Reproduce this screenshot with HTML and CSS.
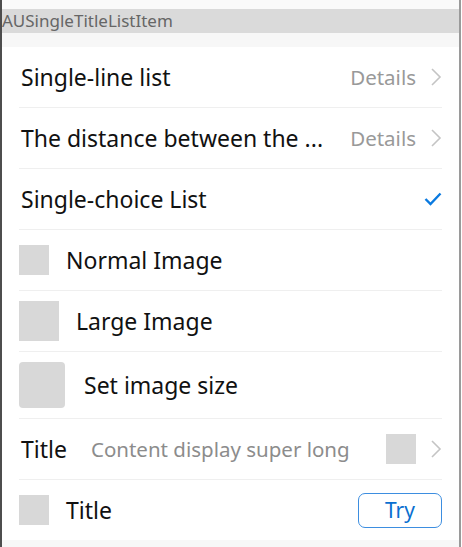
FILE: index.html
```html
<!DOCTYPE html>
<html>
<head>
<meta charset="utf-8">
<link rel="stylesheet" href="styles.css">
</head>
<body>
<div class="frame">
  <div class="top-gap"></div>
  <div class="section-title">AUSingleTitleListItem</div>
  <div class="mid-gap"></div>
  <div class="list">
    <div class="row">
      <span class="title">Single-line list</span>
      <span class="right"><span class="detail">Details</span><svg class="chev" viewBox="0 0 12 20" width="12" height="20"><path d="M2 2 L10 10 L2 18" fill="none" stroke="#c4c4c4" stroke-width="1.6"/></svg></span>
    </div>
    <div class="row">
      <span class="title">The distance between the ...</span>
      <span class="right"><span class="detail">Details</span><svg class="chev" viewBox="0 0 12 20" width="12" height="20"><path d="M2 2 L10 10 L2 18" fill="none" stroke="#c4c4c4" stroke-width="1.6"/></svg></span>
    </div>
    <div class="row">
      <span class="title">Single-choice List</span>
      <span class="right"><svg class="check" viewBox="0 0 18 14" width="18" height="14"><path d="M1.5 7 L6.5 12 L16.5 1.5" fill="none" stroke="#0a7ae0" stroke-width="2.4" stroke-linejoin="miter"/></svg></span>
    </div>
    <div class="row img-row">
      <span class="img img-30"></span>
      <span class="title">Normal Image</span>
    </div>
    <div class="row img-row">
      <span class="img img-40"></span>
      <span class="title">Large Image</span>
    </div>
    <div class="row img-row">
      <span class="img img-46"></span>
      <span class="title">Set image size</span>
    </div>
    <div class="row">
      <span class="title">Title</span>
      <span class="content">Content display super long</span>
      <span class="right"><span class="img img-30"></span><svg class="chev" viewBox="0 0 12 20" width="12" height="20"><path d="M2 2 L10 10 L2 18" fill="none" stroke="#c4c4c4" stroke-width="1.6"/></svg></span>
    </div>
    <div class="row img-row last">
      <span class="img img-30"></span>
      <span class="title">Title</span>
      <span class="right"><button class="try">Try</button></span>
    </div>
  </div>
  <div class="bottom-gap"></div>
</div>
</body>
</html>
```
FILE: styles.css
```css
html, body {
  margin: 0;
  padding: 0;
  background: #ffffff;
}
body {
  font-family: "Noto Sans", "Open Sans", sans-serif;
  width: 462px;
  height: 547px;
  overflow: hidden;
}
.frame {
  width: 457px;
  height: 547px;
  border-left: 2px solid #4d4d4d;
  border-right: 2px solid #9a9a9a;
  background: #ffffff;
  display: flex;
  flex-direction: column;
}
.top-gap {
  height: 9px;
  flex: none;
  background: #fafafa;
}
.section-title {
  height: 24px;
  flex: none;
  line-height: 24px;
  background: #dadada;
  color: #666666;
  font-size: 17px;
  white-space: nowrap;
  overflow: hidden;
}
.mid-gap {
  height: 14px;
  flex: none;
  background: #f7f7f7;
}
.list {
  flex: none;
  background: #fff;
  padding: 0 17px;
}
.row {
  display: flex;
  align-items: center;
  min-height: 60px;
  border-bottom: 1px solid #efefef;
  gap: 18px;
}
.img-row {
  gap: 17px;
}
.row.last {
  border-bottom: none;
}
.title {
  font-size: 23px;
  color: #111111;
  white-space: nowrap;
  padding-left: 2px;
}
.img-row .title {
  padding-left: 0;
}
.right {
  margin-left: auto;
  display: flex;
  align-items: center;
  gap: 14px;
}
.detail {
  font-size: 20.5px;
  color: #999999;
}
.chev {
  display: block;
}
.check {
  display: block;
}
.content {
  font-size: 20.5px;
  color: #8c8c8c;
  white-space: nowrap;
  margin-left: 6px;
}
.img {
  display: block;
  background: #d8d8d8;
  flex: none;
}
.img-30 { width: 30px; height: 30px; }
.img-40 { width: 40px; height: 40px; }
.img-46 { width: 46px; height: 46px; border-radius: 4px; margin: 10px 2px 10px 0; }
.try {
  font-family: inherit;
  font-size: 21px;
  color: #0a6fd0;
  background: #fff;
  border: 1px solid #3d8ee0;
  border-radius: 7px;
  width: 84px;
  height: 35px;
  padding: 0;
}
.bottom-gap {
  flex: 1;
  background: #f7f7f7;
}
```
